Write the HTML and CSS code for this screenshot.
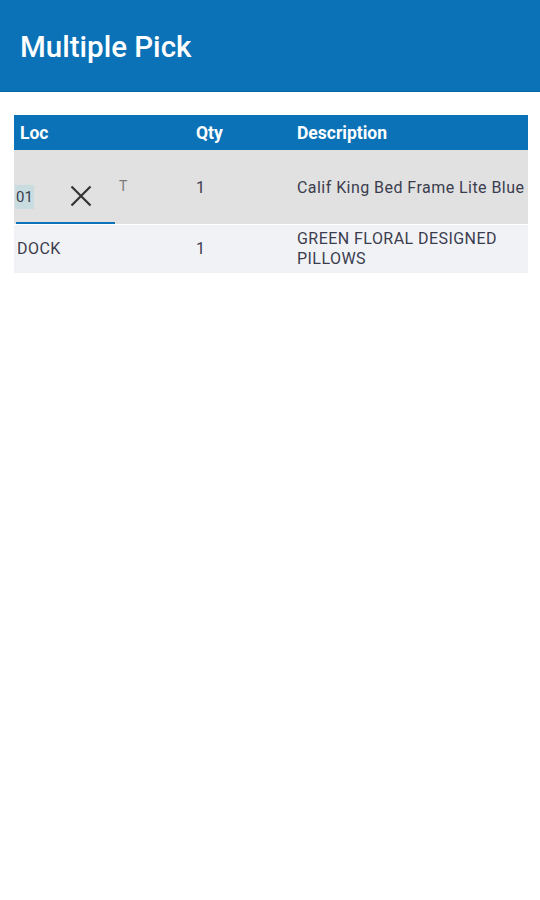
FILE: index.html
```html
<!DOCTYPE html>
<html>
<head>
<meta charset="utf-8">
<link rel="stylesheet" href="styles.css">
</head>
<body>
<header class="appbar"><h1 class="title">Multiple Pick</h1></header>
<main class="content">
  <div class="table">
    <div class="row head">
      <div class="cell">Loc</div>
      <div class="cell">Qty</div>
      <div class="cell">Description</div>
    </div>
    <div class="row active">
      <div class="cell loc-edit">
        <div class="field">
          <span class="sel">01</span>
          <svg class="clear" width="22" height="22" viewBox="0 0 22 22"><path d="M1.5 1.5 L20.5 20.5 M20.5 1.5 L1.5 20.5" stroke="#333" stroke-width="2.2" fill="none"/></svg>
          <span class="tmark">T</span>
        </div>
      </div>
      <div class="cell">1</div>
      <div class="cell">Calif King Bed Frame Lite Blue</div>
    </div>
    <div class="row alt">
      <div class="cell">DOCK</div>
      <div class="cell">1</div>
      <div class="cell">GREEN FLORAL DESIGNED PILLOWS</div>
    </div>
  </div>
</main>
</body>
</html>
```
FILE: styles.css
```css
* { box-sizing: border-box; }
body { margin: 0; background: #fff; font-family: Roboto, "Noto Sans", sans-serif; color: #3b3d4e; }
.appbar { height: 92px; background: #0b72b7; border-bottom: 1px solid #0a64a2; display: flex; align-items: center; padding: 0 20px; }
.title { margin: 0 0 -2px; color: #fff; font-size: 29.5px; font-weight: 500; letter-spacing: 0; }
.content { padding: 23px 12px 0 14px; }
.table { display: flex; flex-direction: column; }
.row { display: grid; grid-template-columns: 176px 101px 1fr; }
.head { height: 35px; background: #0b72b7; color: #fff; font-weight: 700; font-size: 17.5px; align-items: center; }
.head .cell { padding-left: 6px; }
.active { height: 75px; background: #e1e1e1; align-items: center; font-size: 16px; letter-spacing: 0.45px; border-bottom: 1px solid #fff; }
.active .cell { padding-left: 6px; }
.alt { height: 48px; background: #f1f2f6; align-items: center; font-size: 16px; letter-spacing: 0.45px; line-height: 20px; }
.alt .cell { padding-left: 6px; padding-right: 10px; }
.alt .cell:first-child { padding-left: 3px; }
.active .loc-edit { padding-left: 2px; align-self: stretch; display: flex; align-items: flex-end; }
.field { width: 99px; height: 46px; border-bottom: 2px solid #0b72b7; display: flex; align-items: flex-start; }
.field > * { flex-shrink: 0; }
.sel { background: #c9dde0; padding: 3px 1px; margin-top: 7px; margin-left: -1px; font-size: 15px; line-height: 18px; letter-spacing: 0; }
.clear { margin-left: 36px; margin-top: 7px; }
.tmark { margin-left: 27px; margin-top: 0; font-size: 14px; color: #7a7a7a; }
```
